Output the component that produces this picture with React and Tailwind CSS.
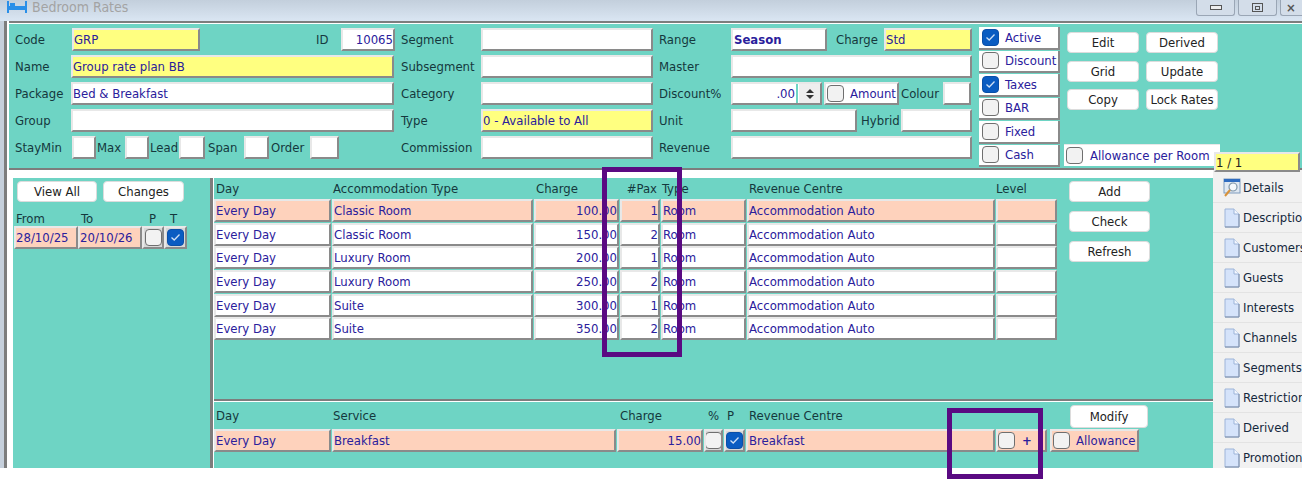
import React from 'react';

const PEACH = 'bg-[#fed2bc]';
const YELLOW = 'bg-[#ffff80]';

// sunken edit box, the same look everywhere on this form
function Field({ className = 'bg-white', children }) {
  return <div className={`h-[23px] shrink-0 flex items-center overflow-hidden whitespace-nowrap text-[#2a209c] border-2 border-r-[#8a8a8a] border-b-[#8a8a8a] border-t-[#e8e8e8] border-l-[#e8e8e8] ${className}`}>{children}</div>;
}

function Check({ on, className = '' }) {
  if (on) {
    return <span className={`w-[17px] h-[17px] shrink-0 rounded-[4px] bg-[#0a5cc2] border border-[#0a4fa8] flex items-center justify-center ${className}`}>
        <svg width="11" height="9" viewBox="0 0 11 9" fill="none"><path d="M1.5 4.5 L4.2 7 L9.5 1.5" stroke="#cfe0f5" strokeWidth="1.3" /></svg>
      </span>;
  }
  return <span className={`w-[17px] h-[17px] shrink-0 rounded-[4px] bg-[#f2f2f2] border border-[#6f6f6f] ${className}`} />;
}

function Btn({ className = '', children }) {
  return <div className={`bg-white rounded-[4px] border border-[#dcdcdc] flex items-center justify-center text-[#222] shrink-0 ${className}`}>{children}</div>;
}

function Label({ className = '', children }) {
  return <span className={`text-[#15383d] whitespace-nowrap shrink-0 ${className}`}>{children}</span>;
}

function PageIcon() {
  return <svg width="16" height="20" viewBox="0 0 16 20" className="shrink-0">
      <path d="M1 1 H10 L15 6 V19 H1 Z" fill="#d5e3fa" stroke="#9db4d8" />
      <path d="M10 1 V6 H15" fill="#f3f7ff" stroke="#9db4d8" />
      <path d="M1 19 H15 V6" fill="none" stroke="#7e8fa8" />
    </svg>;
}

function DetailsIcon() {
  return <svg width="18" height="20" viewBox="0 0 18 20" className="shrink-0">
      <rect x="1" y="1" width="16" height="14" fill="#dfe8f2" stroke="#7f9bbd" />
      <rect x="1" y="1" width="16" height="3" fill="#2f6cc0" />
      <circle cx="10" cy="9" r="4" fill="#f4f8fc" stroke="#7f95a8" strokeWidth="1.2" />
      <path d="M7 12 L2 18" stroke="#d8923a" strokeWidth="2" />
    </svg>;
}

const checks = [['Active', true], ['Discount', false], ['Taxes', true], ['BAR', false], ['Fixed', false], ['Cash', false]];
const rates = [
  ['Classic Room', '100.00', '1'],
  ['Classic Room', '150.00', '2'],
  ['Luxury Room', '200.00', '1'],
  ['Luxury Room', '250.00', '2'],
  ['Suite', '300.00', '1'],
  ['Suite', '350.00', '2']
];
const tabs = ['Details', 'Description', 'Customers', 'Guests', 'Interests', 'Channels', 'Segments', 'Restrictions', 'Derived', 'Promotions'];

export default function App() {
  return <div className="relative w-[1302px] h-[480px] overflow-hidden bg-white text-[13px] leading-[15px] font-['DejaVu_Sans_Condensed','DejaVu_Sans',sans-serif]">
      {/* title bar */}
      <div className="h-[21px] bg-gradient-to-b from-[#c3cfdc] to-[#dae6f3] flex items-start pl-[7px]">
        <svg width="20" height="12" viewBox="0 0 20 12" className="mt-[1px] shrink-0">
          <path d="M0 0 H2 V5 H18 V0 H20 V12 H18 V9 H2 V12 H0 Z" fill="#2a8fe8" />
          <rect x="3" y="2" width="5" height="3" fill="#2a8fe8" />
        </svg>
        <span className="ml-[5px] text-[#a3a3a3] text-[14px] leading-[16px] -mt-[1px]">Bedroom Rates</span>
        <div className="ml-auto flex gap-[3px]">
          <div className="w-[39px] h-[16px] rounded-b-[3px] border border-t-0 border-[#9aa6b5] bg-[#d3dde9] flex items-center justify-center"><span className="w-[12px] h-[5px] border border-[#555] bg-[#eee]" /></div>
          <div className="w-[39px] h-[16px] rounded-b-[3px] border border-t-0 border-[#9aa6b5] bg-[#d3dde9] flex items-center justify-center"><span className="w-[11px] h-[9px] border border-[#555] flex items-center justify-center"><span className="w-[5px] h-[4px] border border-[#555]" /></span></div>
          <div className="w-[22px] h-[16px] rounded-bl-[3px] border border-t-0 border-r-0 border-[#9aa6b5] bg-[#d3dde9] pl-[5px] text-[#555] font-bold">×</div>
        </div>
      </div>

      <div className="flex h-[447px]">
        {/* window edge */}
        <div className="flex w-[9px] shrink-0">
          <div className="w-[4px] bg-[#c6d0dc]" />
          <div className="w-[3px] bg-[#7d7d7d]" />
          <div className="w-[2px] bg-white" />
        </div>

        <div className="flex flex-col flex-1 min-w-0">
          <div className="h-[3px] shrink-0 border-t-2 border-[#7d7d7d] bg-white" />
          {/* header form */}
          <div className="h-[144px] shrink-0 bg-[#6ed4c4] flex pl-[6px]">
            <div className="w-[380px] shrink-0 flex flex-col gap-[4px] pt-[4px]">
              <div className="flex items-center">
                <Label className="w-[57px]">Code</Label>
                <Field className={`w-[128px] ${YELLOW}`}>GRP</Field>
                <Label className="ml-[116px] w-[25px]">ID</Label>
                <Field className="w-[54px] bg-white justify-end">10065</Field>
              </div>
              <div className="flex items-center"><Label className="w-[56px]">Name</Label><Field className={`w-[323px] ${YELLOW}`}>Group rate plan BB</Field></div>
              <div className="flex items-center"><Label className="w-[56px]">Package</Label><Field className="w-[323px] bg-white">Bed &amp; Breakfast</Field></div>
              <div className="flex items-center"><Label className="w-[56px]">Group</Label><Field className="w-[323px] bg-white" /></div>
              <div className="flex items-center">
                <Label className="w-[57px]">StayMin</Label>
                <Field className="w-[24px] bg-white" />
                <Label className="ml-[1px] w-[28px]">Max</Label>
                <Field className="w-[24px] bg-white" />
                <Label className="ml-[1px] w-[29px]">Lead</Label>
                <Field className="w-[26px] bg-white" />
                <Label className="ml-[3px] w-[36px]">Span</Label>
                <Field className="w-[25px] bg-white" />
                <Label className="ml-[2px] w-[39px]">Order</Label>
                <Field className="w-[29px] bg-white" />
              </div>
            </div>

            <div className="w-[252px] ml-[6px] shrink-0 flex flex-col gap-[4px] pt-[4px]">
              {[['Segment', ''], ['Subsegment', ''], ['Category', ''], ['Type', '0 - Available to All'], ['Commission', '']].map(([name, value]) => <div key={name} className="flex items-center">
                  <Label className="w-[80px]">{name}</Label>
                  <Field className={`w-[172px] ${value ? YELLOW : 'bg-white'}`}>{value}</Field>
                </div>)}
            </div>

            <div className="w-[313px] ml-[6px] shrink-0 flex flex-col gap-[4px] pt-[4px]">
              <div className="flex items-center">
                <Label className="w-[72px]">Range</Label>
                <Field className="w-[96px] bg-white font-bold text-[#1c1590] pl-[1px]">Season</Field>
                <Label className="ml-[9px] w-[48px]">Charge</Label>
                <Field className={`w-[88px] ${YELLOW}`}>Std</Field>
              </div>
              <div className="flex items-center"><Label className="w-[72px]">Master</Label><Field className="w-[241px] bg-white" /></div>
              <div className="flex items-center">
                <Label className="w-[72px]">Discount%</Label>
                <Field className="w-[91px] bg-white justify-end">
                  <span className="mr-[1px]">.00</span>
                  <span className="w-[2px] h-full bg-[#6ed4c4]" />
                  <span className="w-[21px] h-full ml-[1px] bg-[#eeeeee] flex flex-col items-center justify-center gap-[2px]">
                    <span className="w-0 h-0 border-x-[4px] border-x-transparent border-b-[4px] border-b-[#333]" />
                    <span className="w-0 h-0 border-x-[4px] border-x-transparent border-t-[4px] border-t-[#333]" />
                  </span>
                </Field>
                <Field className="ml-[2px] w-[75px] bg-white">
                  <Check className="ml-[1px]" />
                  <span className="ml-[6px]">Amount</span>
                </Field>
                <Label className="ml-[2px] w-[42px]">Colour</Label>
                <Field className="w-[28px] bg-white" />
              </div>
              <div className="flex items-center">
                <Label className="w-[72px]">Unit</Label>
                <Field className="w-[126px] bg-white" />
                <Label className="ml-[4px] w-[40px]">Hybrid</Label>
                <Field className="w-[71px] bg-white" />
              </div>
              <div className="flex items-center"><Label className="w-[72px]">Revenue</Label><Field className="w-[241px] bg-white" /></div>
            </div>

            <div className="w-[81px] ml-[7px] shrink-0 flex flex-col gap-[1px] pt-[3px]">
              {checks.map(([name, on]) => <div key={name} className="h-[22.5px] flex items-center pl-[3px] bg-white border-r-2 border-b-2 border-[#8a8a8a] text-[#2a209c] overflow-hidden whitespace-nowrap">
                  <Check on={on} />
                  <span className="ml-[6px]">{name}</span>
                </div>)}
            </div>

            <div className="w-[152px] ml-[7px] shrink-0 flex flex-col pt-[8px] pb-[2px]">
              <div className="grid grid-cols-[72px_72px] gap-x-[7px] gap-y-[7.5px]">
                {['Edit', 'Derived', 'Grid', 'Update', 'Copy', 'Lock Rates'].map(name => <Btn key={name} className="h-[21px]">{name}</Btn>)}
              </div>
              <div className="mt-auto -ml-[3px] w-[156px] h-[22px] bg-white border-t border-[#e8e8e8] flex items-center pl-[2px] text-[#2a209c] whitespace-nowrap">
                <Check />
                <span className="ml-[7px]">Allowance per Room</span>
              </div>
            </div>
          </div>
          <div className="h-[2px] shrink-0 bg-[#7d7d7d]" />

          <div className="flex flex-1 min-h-0">
            <div className="flex flex-1 min-w-0 pt-[8px] pl-[4px] bg-white">
              {/* date filter */}
              <div className="w-[197px] shrink-0 bg-[#6ed4c4] flex flex-col pt-[3px] pl-[1px]">
                <div className="flex gap-[6px] pl-[3px]">
                  <Btn className="w-[80px] h-[21px]">View All</Btn>
                  <Btn className="w-[81px] h-[21px]">Changes</Btn>
                </div>
                <div className="flex mt-[9px] h-[14px] items-center">
                  <Label className="ml-[2px] w-[65px]">From</Label>
                  <Label className="w-[68px]">To</Label>
                  <Label className="w-[21px]">P</Label>
                  <Label>T</Label>
                </div>
                <div className="flex mt-[1px]">
                  <Field className={`w-[64px] ${PEACH}`}>28/10/25</Field>
                  <Field className={`w-[64px] ${PEACH}`}>20/10/26</Field>
                  <Field className="w-[22px] bg-[#d8d8d8] justify-center"><Check /></Field>
                  <Field className="w-[23px] bg-[#d8d8d8] justify-center"><Check on /></Field>
                </div>
              </div>
              <div className="w-[4px] shrink-0 flex">
                <div className="w-[3px] bg-[#7d7d7d]" />
                <div className="w-[1px] bg-white" />
              </div>

              <div className="flex-1 min-w-0 flex flex-col">
                {/* rates grid */}
                <div className="h-[221px] shrink-0 bg-[#6ed4c4] flex">
                  <div className="w-[843px] shrink-0">
                    <div className="grid grid-cols-[117px_201px_85px_40px_85px_248px_61px] gap-x-[1px] h-[21px] items-center">
                      <Label className="pl-[2px]">Day</Label>
                      <Label className="pl-[1px]">Accommodation Type</Label>
                      <Label className="pl-[2px]">Charge</Label>
                      <Label className="text-right pr-[3px]">#Pax</Label>
                      <Label className="pl-[1px]">Type</Label>
                      <Label className="pl-[2px]">Revenue Centre</Label>
                      <Label>Level</Label>
                    </div>
                    <div className="grid grid-cols-[117px_201px_85px_40px_85px_248px_61px] gap-x-[1px] gap-y-[0.7px]">
                      {rates.map((row, i) => {
                        const bg = i === 0 ? PEACH : 'bg-white';
                        return <React.Fragment key={i}>
                            <Field className={bg}>Every Day</Field>
                            <Field className={bg}>{row[0]}</Field>
                            <Field className={`${bg} justify-end`}>{row[1]}</Field>
                            <Field className={`${bg} justify-end`}>{row[2]}</Field>
                            <Field className={bg}>Room</Field>
                            <Field className={bg}>Accommodation Auto</Field>
                            <Field className={bg} />
                          </React.Fragment>;
                      })}
                    </div>
                  </div>
                  <div className="ml-[12px] flex flex-col gap-[9px] pt-[3px]">
                    <Btn className="w-[81px] h-[21px]">Add</Btn>
                    <Btn className="w-[81px] h-[21px]">Check</Btn>
                    <Btn className="w-[81px] h-[21px]">Refresh</Btn>
                  </div>
                </div>
                <div className="h-[3px] shrink-0 border-t-2 border-[#7d7d7d] bg-white" />
                {/* services grid */}
                <div className="flex-1 bg-[#6ed4c4] pt-[3px]">
                  <div className="flex">
                    <div className="grid grid-cols-[117px_284px_86px_19px_21px_249px_51px_91px] gap-x-[1px] w-[856px] h-[24px] items-center pb-[3px] shrink-0">
                      <Label className="pl-[2px]">Day</Label>
                      <Label className="pl-[1px]">Service</Label>
                      <Label className="pl-[3px]">Charge</Label>
                      <Label className="pl-[4px]">%</Label>
                      <Label className="pl-[3px]">P</Label>
                      <Label className="pl-[3px]">Revenue Centre</Label>
                    </div>
                    <Btn className="w-[78px] h-[23px]">Modify</Btn>
                  </div>
                  <div className="grid grid-cols-[117px_284px_86px_19px_21px_249px_51px_91px] gap-x-[1px]">
                    <Field className={PEACH}>Every Day</Field>
                    <Field className={PEACH}>Breakfast</Field>
                    <Field className={`${PEACH} justify-end`}>15.00</Field>
                    <Field className="bg-[#d8d8d8] justify-center"><Check /></Field>
                    <Field className="bg-[#d8d8d8] justify-center"><Check on /></Field>
                    <Field className={`${PEACH} pl-[1px]`}>Breakfast</Field>
                    <Field className={PEACH}>
                      <Check />
                      <span className="ml-[7px] font-bold">+</span>
                    </Field>
                    <Field className={`${PEACH} ml-[2px]`}>
                      <Check className="ml-[1px]" />
                      <span className="ml-[6px]">Allowance</span>
                    </Field>
                  </div>
                </div>
              </div>
            </div>

            {/* side tabs */}
            <div className="w-[89px] shrink-0 pt-[3px] bg-[#f1f1f1] overflow-hidden">
              {tabs.map(name => <div key={name} className="h-[30px] flex items-center pl-[10px] gap-[3px] border-b border-[#e3e3e3] text-[#15283d] whitespace-nowrap">
                  <span className="w-[17px] flex justify-center shrink-0">{name === 'Details' ? <DetailsIcon /> : <PageIcon />}</span>
                  {name}
                </div>)}
            </div>
          </div>
        </div>
      </div>

      {/* record counter sits over the tab strip */}
      <div className="absolute left-[1214px] top-[152px] w-[86px] h-[20px] bg-[#ffff80] border-2 border-r-[#8a8a8a] border-b-[#8a8a8a] border-t-[#e8e8e8] border-l-[#e8e8e8] flex items-center text-[#222]">1 / 1</div>

      {/* purple annotation boxes */}
      <div className="absolute left-[602px] top-[167px] w-[80px] h-[190px] border-[5px] border-[#5a0a82]" />
      <div className="absolute left-[947px] top-[408px] w-[96px] h-[71px] border-[5px] border-[#5a0a82]" />
    </div>;
}
